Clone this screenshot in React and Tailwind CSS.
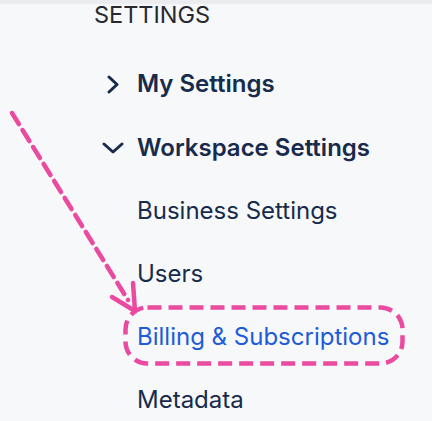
import React from "react";

const navy = "text-[#172b4d]";

const ChevronRight = () => (
  <svg width="14" height="19" viewBox="0 0 14 19" fill="none" className="shrink-0">
    <polyline points="3,2 11,9.5 3,17" stroke="#172b4d" strokeWidth="3" strokeLinecap="round" strokeLinejoin="round" />
  </svg>
);

const ChevronDown = () => (
  <svg width="22" height="14" viewBox="0 0 22 14" fill="none" className="shrink-0">
    <polyline points="2,3 11,11 20,3" stroke="#172b4d" strokeWidth="3" strokeLinecap="round" strokeLinejoin="round" />
  </svg>
);

const Callout = () => (
  <svg
    className="absolute inset-0 pointer-events-none"
    width="432"
    height="421"
    viewBox="0 0 432 421"
    fill="none"
  >
    {/* dashed arrow */}
    <line x1="12" y1="113" x2="128" y2="300" stroke="#ea4aa0" strokeWidth="4.5" strokeDasharray="13 7" strokeLinecap="round" />
    <polyline points="133,283 135,311 112,297" stroke="#ea4aa0" strokeWidth="4.5" strokeLinecap="round" strokeLinejoin="round" />
    {/* dashed highlight around the active item */}
    <rect x="125.5" y="307.5" width="277" height="56" rx="22" stroke="#ea4aa0" strokeWidth="4.5" strokeDasharray="14 7" />
  </svg>
);

const App = () => {
  return (
    <div className="relative w-[432px] h-[421px] overflow-hidden bg-[#f7f8fa] font-['Inter',sans-serif]">
      <div className="absolute top-0 left-0 right-0 h-[3px] bg-[#ebecef] shadow-[0_1px_2px_rgba(0,0,0,0.06)]"></div>

      <div className="pl-[94px]">
        <div className="h-[30px] pt-[1px] text-[23.5px] leading-[28px] text-[#262a30]">SETTINGS</div>

        <div className="mt-[22px] flex flex-col">
          <div className="h-[64px] flex items-center gap-[17px] pl-[12px]">
            <ChevronRight />
            <span className={`text-[24px] font-semibold ${navy}`}>My Settings</span>
          </div>
          <div className="h-[63px] flex items-center gap-[13px] pl-[8px]">
            <ChevronDown />
            <span className={`text-[24px] font-semibold ${navy}`}>Workspace Settings</span>
          </div>
          <div className="pl-[43px] flex flex-col">
            <div className={`h-[63px] flex items-center text-[24px] ${navy}`}>Business Settings</div>
            <div className={`h-[63px] flex items-center text-[24px] ${navy}`}>Users</div>
            <div className="h-[63px] flex items-center text-[24px] text-[#1d5bd8]">Billing &amp; Subscriptions</div>
            <div className={`h-[63px] flex items-center text-[24px] ${navy}`}>Metadata</div>
          </div>
        </div>
      </div>

      <Callout />
    </div>
  );
};

export default App;
